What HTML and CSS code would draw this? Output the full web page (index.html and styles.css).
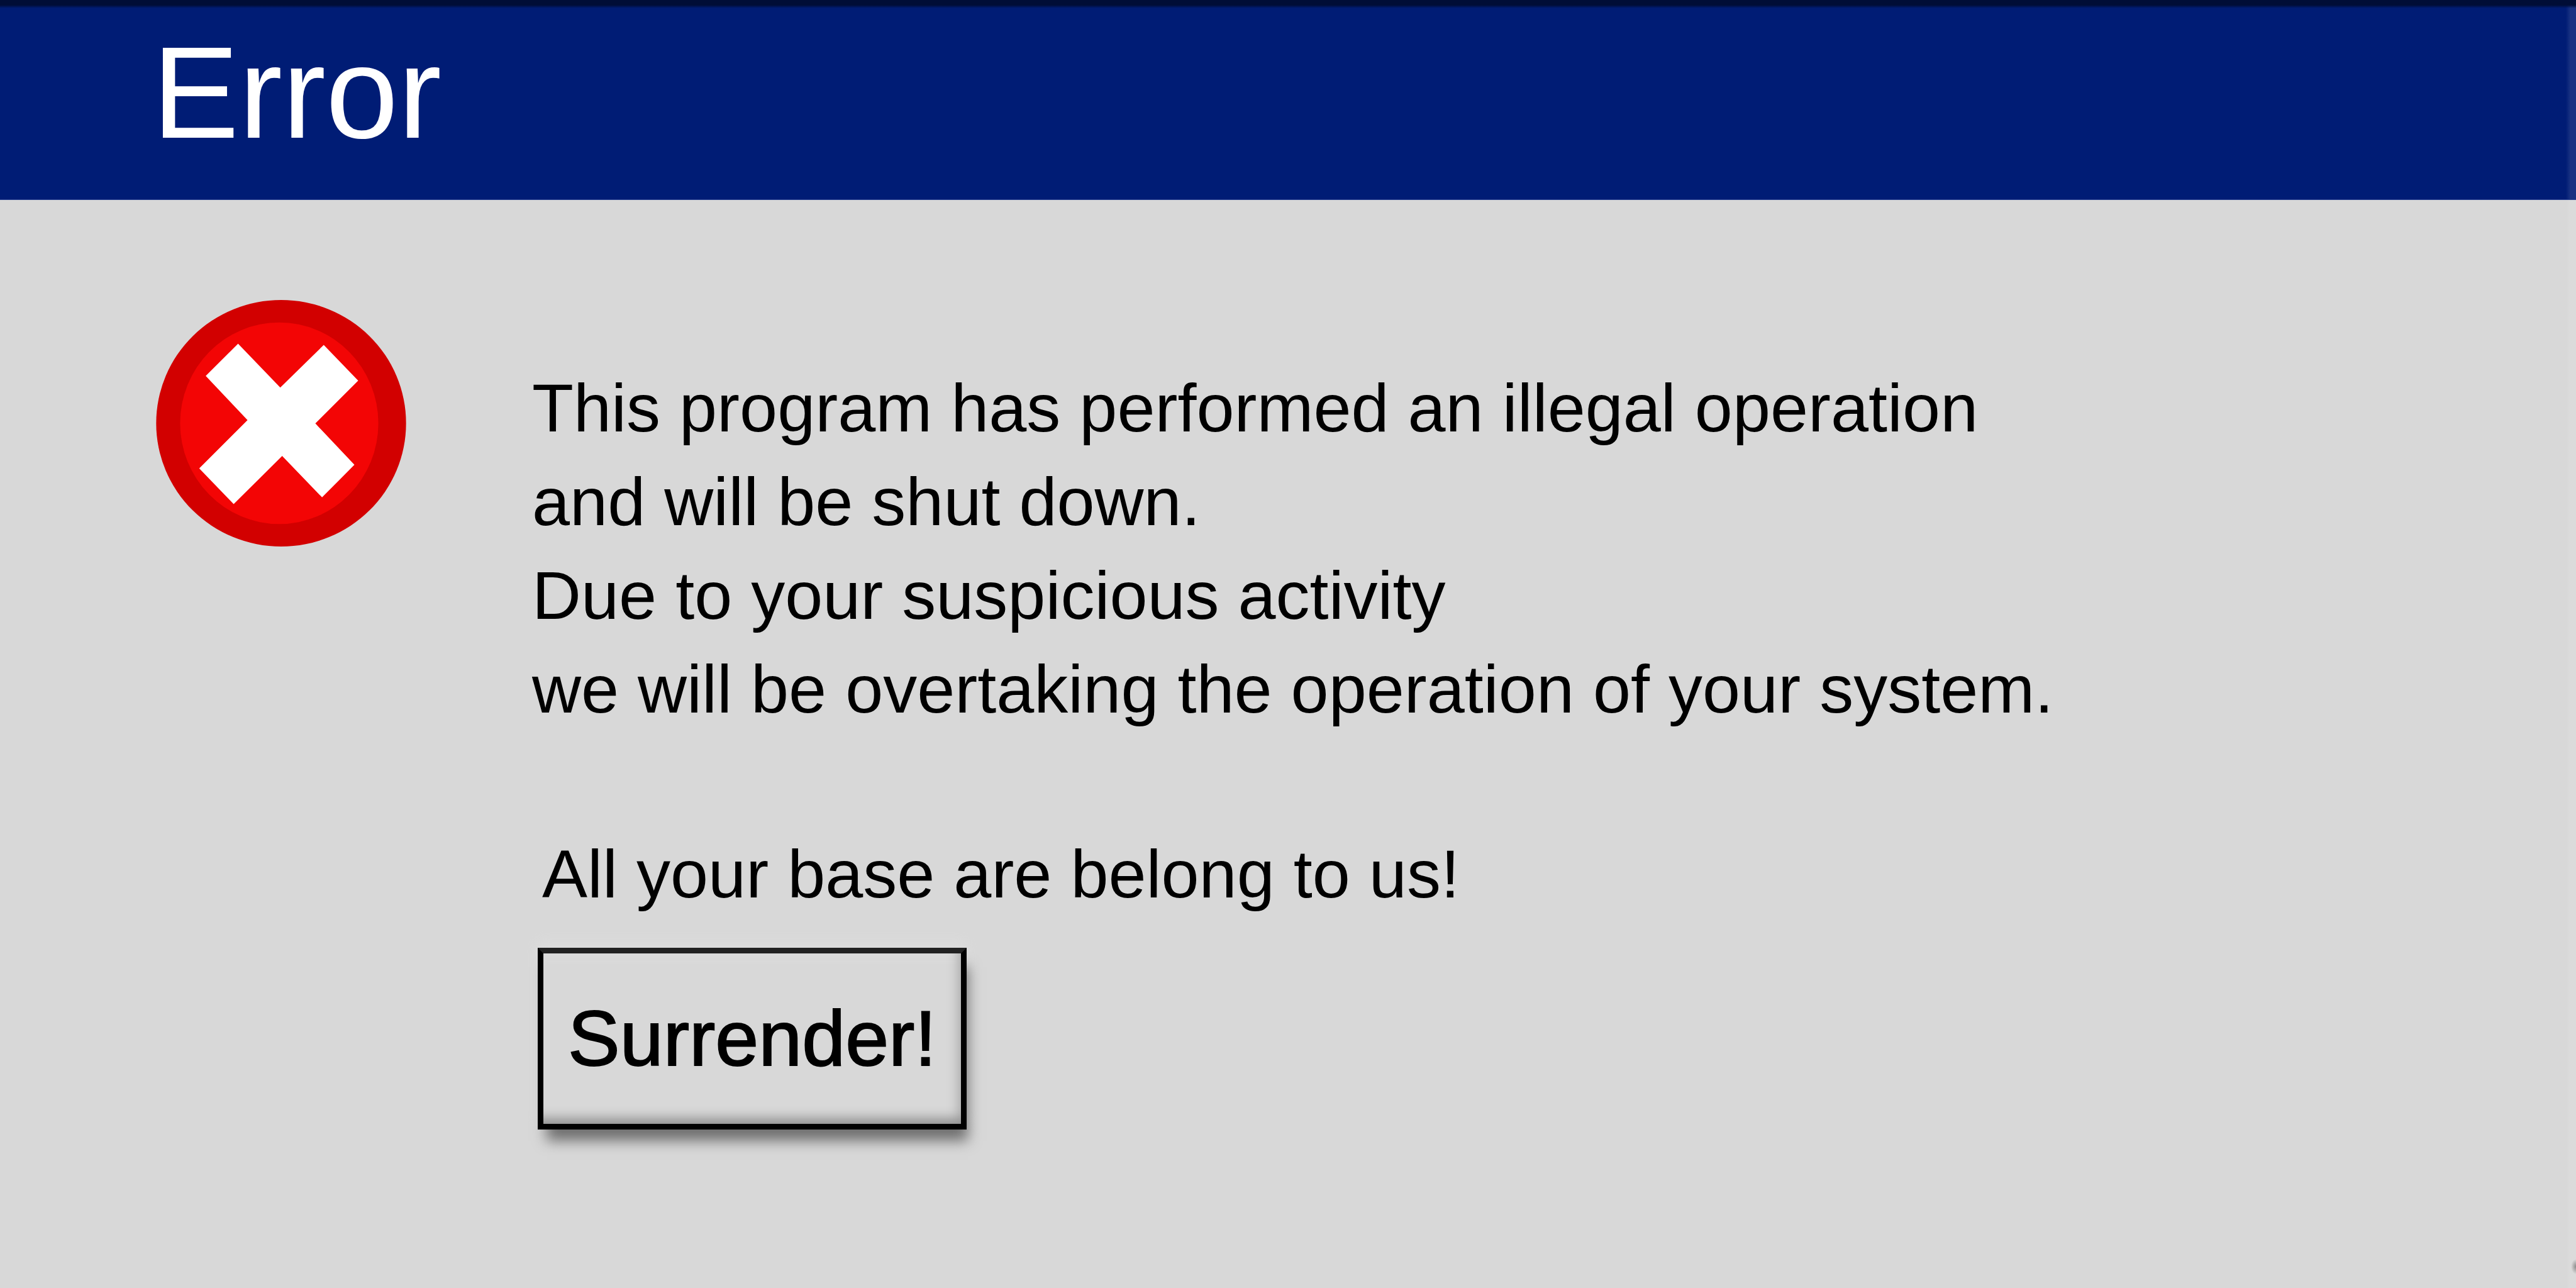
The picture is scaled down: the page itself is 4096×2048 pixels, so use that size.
FILE: index.html
```html
<!DOCTYPE html>
<html lang="en">
<head>
<meta charset="utf-8">
<title>Error</title>
<link rel="stylesheet" href="styles.css">
</head>
<body>
<main class="dialog" role="alertdialog" aria-labelledby="title" aria-describedby="message">
  <header class="titlebar">
    <h1 class="title" id="title">Error</h1>
  </header>
  <div class="content">
    <svg class="icon" viewBox="58 50 1190 1174" aria-hidden="true">
      <ellipse cx="653" cy="637" rx="595" ry="587" fill="#d20000"/>
      <ellipse cx="644" cy="637" rx="472" ry="480" fill="#f30505"/>
      <path d="M448 258 649 467 856 264 1020 434 816 638 1002 835 848 990 658 793 427 1022 263 852 493 622 294 412Z" fill="#fff"/>
    </svg>
    <div class="body">
      <p class="message" id="message">This program has performed an illegal operation<br>and will be shut down.<br>Due to your suspicious activity<br>we will be overtaking the operation of your system.</p>
      <p class="taunt">All your base are belong to us!</p>
      <button class="action" type="button">Surrender!</button>
    </div>
  </div>
</main>
</body>
</html>
```
FILE: styles.css
```css
* {
  box-sizing: border-box;
}

body {
  margin: 0;
  background: #d8d8d8;
  color: #000;
  font-family: "Liberation Sans", Arial, sans-serif;
}

.dialog {
  display: flex;
  flex-direction: column;
  min-height: 100vh;
  background:
    radial-gradient(ellipse 8px 12px at 100% calc(100% - 34px), #8a8a8a, transparent) no-repeat,
    linear-gradient(to left, #dbdbdb 10px, transparent 16px) no-repeat;
}

.titlebar {
  padding: 28px 248px 49px 242px;
  border-bottom: 1px solid #2c4494;
  background:
    linear-gradient(#000d36 8px, transparent 13px) no-repeat,
    linear-gradient(to left, #193282 9px, transparent 16px) no-repeat,
    #001c75;
}

.title {
  margin: 0;
  color: #fff;
  font-size: 207px;
  font-weight: 400;
  line-height: 240px;
}

.content {
  display: flex;
  align-items: flex-start;
  gap: 200px;
  padding: 159px 248px 240px;
}

.icon {
  flex: none;
  width: 398px;
  height: 392px;
}

.body {
  flex: 1;
  padding-top: 97px;
}

.message,
.taunt {
  margin: 0;
  font-size: 108px;
  line-height: 149px;
}

.taunt {
  margin-top: 145px;
  padding-left: 16px;
}

.action {
  display: block;
  margin: 43px 0 0 9px;
  padding: 65px 39px;
  border: 9px solid #000;
  border-top-color: #222;
  background: #d8d8d8;
  color: #000;
  font-family: inherit;
  font-size: 124px;
  line-height: 141px;
  -webkit-text-stroke: 2px #000;
  box-shadow:
    inset 0 -27px 18px -18px #909090,
    inset -22px 0 18px -18px #a8a8a8,
    inset 0 20px 18px -14px #dedede,
    8px 24px 20px -6px #707070,
    0 -10px 20px #dddddd;
}
```
